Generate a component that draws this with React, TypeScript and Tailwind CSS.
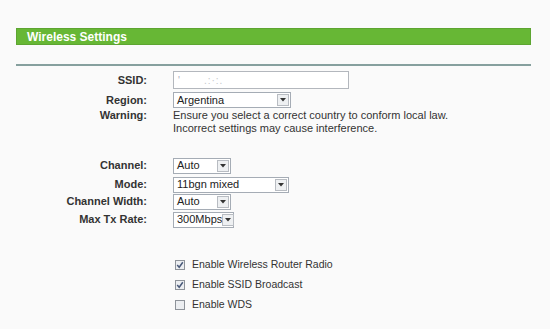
const Select = ({ value, width }: { value: string; width: string }) => (
    <div className={`flex h-[16px] items-center border border-[#a5acb5] bg-white ${width}`}>
        <span className="flex-1 whitespace-nowrap pl-[3px] text-[11px] leading-none text-[#222]">{value}</span>
        <span className="mr-[1px] flex h-[12px] w-[12px] shrink-0 items-center justify-center border border-[#b8bcc2] bg-[#eef0f2]">
            <svg width="6" height="4" viewBox="0 0 6 4">
                <path d="M0 0 L6 0 L3 3.5 Z" fill="#333" />
            </svg>
        </span>
    </div>
);

const Check = ({ checked, label }: { checked: boolean; label: string }) => (
    <div className="flex h-[20px] items-center">
        <span className="flex h-[10px] w-[10px] items-center justify-center border border-[#8e939a] bg-[#eceef1]">
            {checked && (
                <svg width="8" height="8" viewBox="0 0 8 8">
                    <path d="M1.2 4 L3.2 6.2 L6.8 1.2" stroke="#4a5a7a" strokeWidth="1.5" fill="none" />
                </svg>
            )}
        </span>
        <span className="ml-[7px] text-[10.5px] text-[#333]">{label}</span>
    </div>
);

const Row = ({ label, children, className = '' }: { label: string; children: React.ReactNode; className?: string }) => (
    <div className={`flex items-center ${className}`}>
        <span className="w-[147px] text-right text-[11px] font-bold text-[#333]">{label}</span>
        <div className="ml-[26px]">{children}</div>
    </div>
);

export default function App() {
    return (
        <div className="h-[329px] w-[550px] bg-[#fafafa] pt-[28px] font-['Liberation_Sans',Arial,sans-serif]">
            <div className="ml-[16px] flex h-[17px] w-[515px] items-center border border-[#5da531] bg-[#67b735] pl-[10px]">
                <span className="text-[12px] font-bold text-white">Wireless Settings</span>
            </div>
            <div className="ml-[16px] mt-[19px] h-[2px] w-[515px] bg-[#86a09e]" />

            <div className="mt-[5px] flex flex-col">
                <Row label="SSID:" className="h-[18px]">
                    <div className="flex h-[18px] w-[176px] items-center border border-[#b3b7bd] bg-white pl-[4px] text-[10px] text-[#aab]">
                        <span>'</span>
                        <span className="ml-[24px] tracking-[1px] text-[#c4c7cc]">.:·:.</span>
                    </div>
                </Row>
                <Row label="Region:" className="mt-[3px] h-[16px]">
                    <Select value="Argentina" width="w-[118px]" />
                </Row>
                <div className="mt-[1px] flex">
                    <span className="w-[147px] text-right text-[11px] font-bold leading-[13px] text-[#333]">Warning:</span>
                    <div className="ml-[26px] text-[11px] leading-[13px] text-[#333]">
                        <div>Ensure you select a correct country to conform local law.</div>
                        <div>Incorrect settings may cause interference.</div>
                    </div>
                </div>

                <Row label="Channel:" className="mt-[23px] h-[15px]">
                    <Select value="Auto" width="w-[58px]" />
                </Row>
                <Row label="Mode:" className="mt-[4px] h-[15px]">
                    <Select value="11bgn mixed" width="w-[116px]" />
                </Row>
                <Row label="Channel Width:" className="mt-[2px] h-[15px]">
                    <Select value="Auto" width="w-[58px]" />
                </Row>
                <Row label="Max Tx Rate:" className="mt-[3px] h-[15px]">
                    <Select value="300Mbps" width="w-[61px]" />
                </Row>

                <div className="ml-[175px] mt-[28px] flex flex-col">
                    <Check checked label="Enable Wireless Router Radio" />
                    <Check checked label="Enable SSID Broadcast" />
                    <Check checked={false} label="Enable WDS" />
                </div>
            </div>
        </div>
    );
}
